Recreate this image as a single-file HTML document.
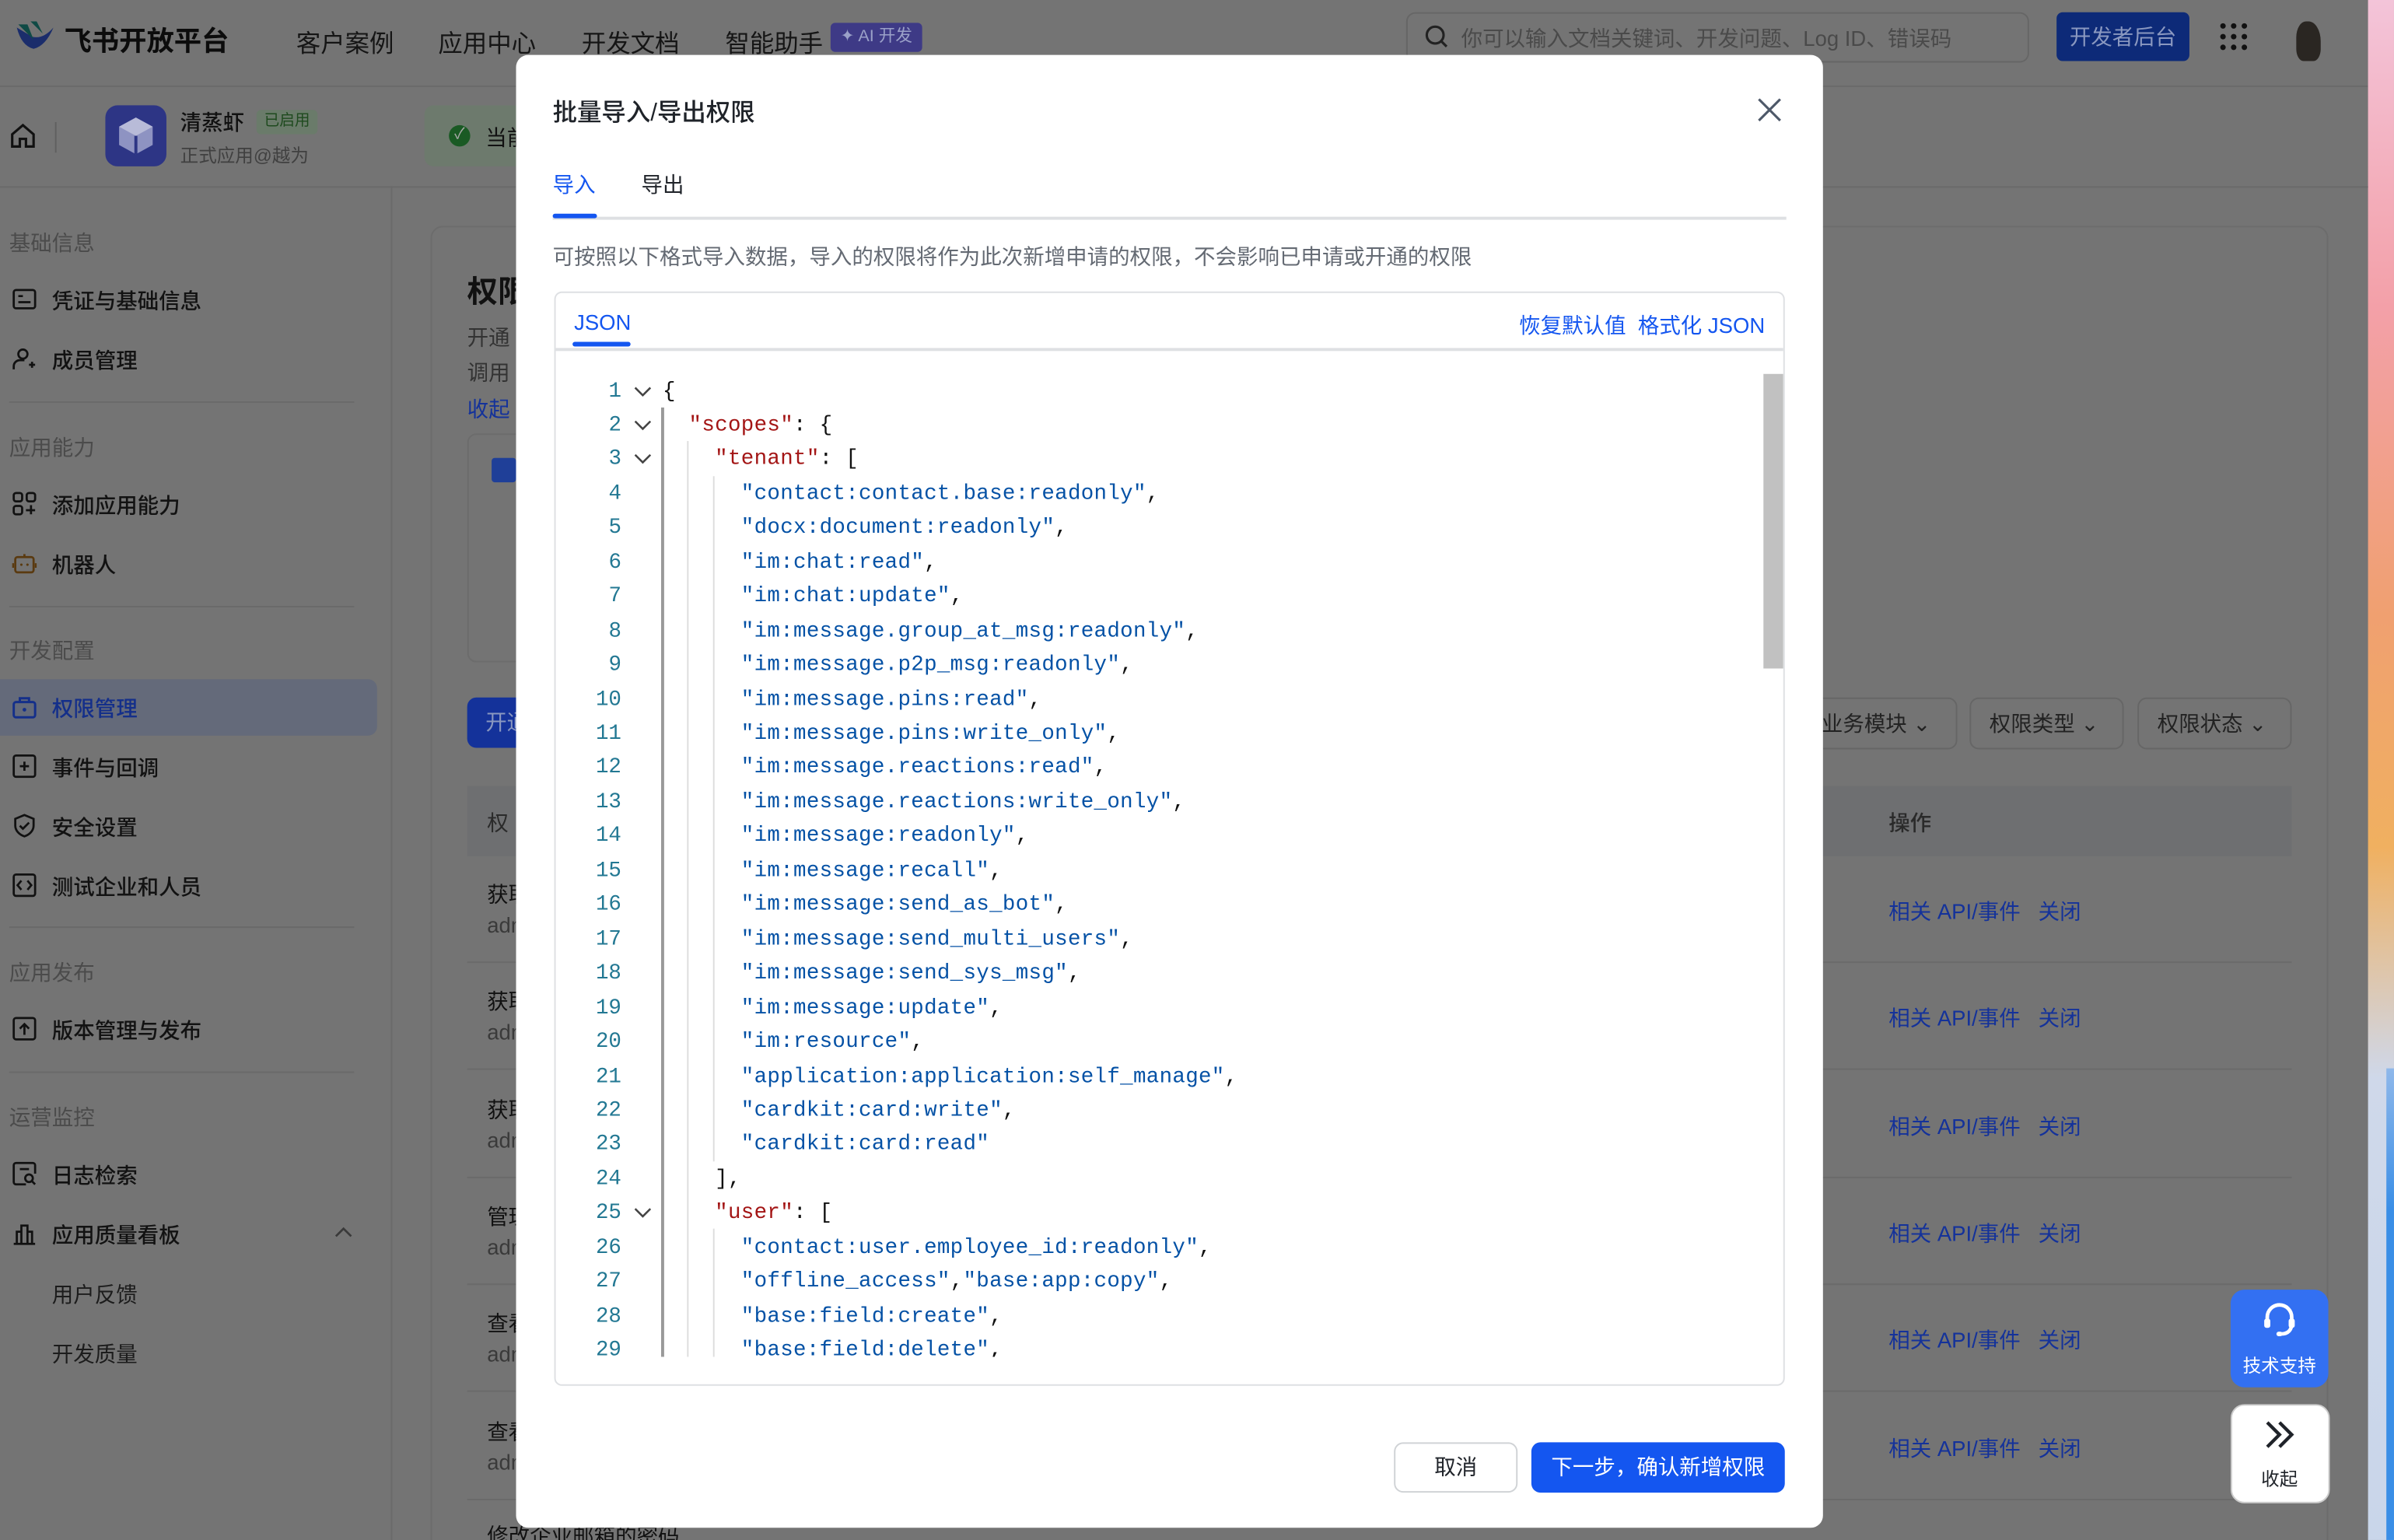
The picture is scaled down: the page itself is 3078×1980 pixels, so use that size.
<!DOCTYPE html>
<html><head><meta charset="utf-8">
<style>
html,body{margin:0;padding:0;width:3078px;height:1980px;overflow:hidden;background:#747474}
#w{position:absolute;left:0;top:0;width:1568px;height:1009px;transform:scale(1.963,1.9623);transform-origin:0 0;font-family:"Liberation Sans","Noto Sans CJK SC",sans-serif;color:#111;background:#747474;overflow:hidden}
.a{position:absolute;white-space:nowrap}
.sec{color:#4b4b4b;font-size:14px}
.it{font-size:14px;color:#121212;font-weight:500}
.ic{position:absolute;width:16px;height:16px}
.hr{position:absolute;height:1px;background:#6a6a6a}
.lk{color:#14329a;font-size:14px}
#modal{position:absolute;left:338px;top:36px;width:856px;height:965px;background:#fff;border-radius:8px}
.code{position:absolute;font-family:"Liberation Mono","DejaVu Sans Mono",monospace;font-size:14px;letter-spacing:0.16px;line-height:22.45px;white-space:pre}
.k{color:#a31515}.s{color:#0451a5}
.ln{position:absolute;left:0;width:68px;text-align:right;font-family:"Liberation Mono",monospace;font-size:14px;line-height:22.45px;color:#237893}
</style></head><body><div id="w">
<!-- header -->
<div class="a" style="left:0;top:56px;width:1551px;height:1px;background:#6a6a6a"></div>
<svg class="a" style="left:8px;top:12px" width="28" height="24" viewBox="0 0 28 24"><path d="M3 6 Q6 18 14 20 Q22 18 27 6 Q20 14 13 12 Z" fill="#1b2d6b"/><path d="M4 4 L10 4 L14 14 Z" fill="#0f4a45"/><path d="M12 2 L16 2 L20 10 Z" fill="#0f4a45"/></svg>
<div class="a" style="left:42px;top:13px;font-size:18px;font-weight:700;color:#0c0c0c">飞书开放平台</div>
<div class="a" style="left:194px;top:15px;font-size:16px;color:#151515">客户案例</div>
<div class="a" style="left:287px;top:15px;font-size:16px;color:#151515">应用中心</div>
<div class="a" style="left:381px;top:15px;font-size:16px;color:#151515">开发文档</div>
<div class="a" style="left:475px;top:15px;font-size:16px;color:#151515">智能助手</div>
<div class="a" style="left:544px;top:15px;width:60px;height:19px;border-radius:3px;background:#3e3a86;color:#9aa0c8;font-size:11px;line-height:19px;text-align:center">✦ AI 开发</div>
<div class="a" style="left:921px;top:8px;width:406px;height:31px;border:1px solid #666;border-radius:6px"></div>
<svg class="a" style="left:933px;top:16px" width="16" height="16" viewBox="0 0 16 16"><circle cx="7" cy="7" r="5.5" fill="none" stroke="#222" stroke-width="1.6"/><path d="M11 11l3.5 3.5" stroke="#222" stroke-width="1.6"/></svg>
<div class="a" style="left:957px;top:15px;font-size:14px;color:#4a4a4a">你可以输入文档关键词、开发问题、Log ID、错误码</div>
<div class="a" style="left:1347px;top:8px;width:87px;height:32px;border-radius:4px;background:#0d2a78;color:#8a98c0;font-size:14px;line-height:32px;text-align:center">开发者后台</div>
<svg class="a" style="left:1454px;top:15px" width="18" height="18"><g fill="#111"><circle cx="2" cy="2" r="1.8"/><circle cx="9" cy="2" r="1.8"/><circle cx="16" cy="2" r="1.8"/><circle cx="2" cy="9" r="1.8"/><circle cx="9" cy="9" r="1.8"/><circle cx="16" cy="9" r="1.8"/><circle cx="2" cy="16" r="1.8"/><circle cx="9" cy="16" r="1.8"/><circle cx="16" cy="16" r="1.8"/></g></svg>
<div class="a" style="left:1504px;top:14px;width:16px;height:26px;border-radius:40% 50% 30% 30%;background:#2a2622"></div>
<!-- right strip -->
<div class="a" style="left:1551px;top:0;width:17px;height:1009px;background:linear-gradient(#f3c4d9,#f3a0a8 20%,#f0a070 40%,#f0b060 55%,#cfd8ea 70%,#c9d6ea 100%)"></div>
<div class="a" style="left:1563px;top:700px;width:5px;height:309px;background:linear-gradient(#8fb8ea,#3a8ee6 30%)"></div>
<!-- app bar -->
<svg class="a" style="left:6px;top:80px" width="18" height="18" viewBox="0 0 18 18"><path d="M2 8 L9 2 L16 8 V16 H11 V11 H7 V16 H2 Z" fill="none" stroke="#111" stroke-width="1.6"/></svg>
<div class="a" style="left:36px;top:80px;width:1px;height:20px;background:#606060"></div>
<div class="a" style="left:69px;top:69px;width:40px;height:40px;border-radius:8px;background:#2d3585"></div>
<svg class="a" style="left:76px;top:75px" width="26" height="28" viewBox="0 0 26 28"><path d="M13 2 L24 8 V20 L13 26 L2 20 V8 Z" fill="#8e93c2"/><path d="M13 2 L24 8 L13 14 L2 8 Z" fill="#b8bbd8"/><path d="M13 14 V26" stroke="#2d3585" stroke-width="2"/></svg>
<div class="a" style="left:118px;top:70px;font-size:14px;color:#111;font-weight:500">清蒸虾</div>
<div class="a" style="left:168px;top:72px;width:40px;height:16px;background:#6a7b6a;border-radius:3px;color:#1e4a1e;font-size:10px;line-height:16px;text-align:center">已启用</div>
<div class="a" style="left:118px;top:93px;font-size:12px;color:#404040">正式应用@越为</div>
<div class="a" style="left:278px;top:69px;width:70px;height:40px;background:#6d7a6d;border-radius:6px"></div>
<div class="a" style="left:294px;top:82px;width:14px;height:14px;border-radius:50%;background:#1a5a24;color:#aaa;font-size:10px;line-height:14px;text-align:center">✓</div>
<div class="a" style="left:318px;top:80px;font-size:14px;color:#111">当前</div>
<div class="a" style="left:0;top:122px;width:1551px;height:1px;background:#6a6a6a"></div>
<!-- sidebar -->
<div class="a" style="left:256px;top:122px;width:1px;height:887px;background:#6a6a6a"></div>
<div class="a sec" style="left:6px;top:149px">基础信息</div>
<svg class="ic" style="left:8px;top:188px" viewBox="0 0 16 16"><rect x="1" y="2" width="14" height="12" rx="1.5" fill="none" stroke="#111" stroke-width="1.4"/><path d="M4 6h3M4 10h8" stroke="#111" stroke-width="1.4"/></svg>
<div class="a it" style="left:34px;top:187px">凭证与基础信息</div>
<svg class="ic" style="left:8px;top:227px" viewBox="0 0 16 16"><circle cx="7" cy="5" r="3" fill="none" stroke="#111" stroke-width="1.4"/><path d="M1 15v-2a4 4 0 0 1 4-4h3M11 12h4M13 10v4" fill="none" stroke="#111" stroke-width="1.4"/></svg>
<div class="a it" style="left:34px;top:226px">成员管理</div>
<div class="hr" style="left:6px;top:263px;width:226px"></div>
<div class="a sec" style="left:6px;top:283px">应用能力</div>
<svg class="ic" style="left:8px;top:322px" viewBox="0 0 16 16"><g fill="none" stroke="#111" stroke-width="1.4"><rect x="1" y="1" width="5.5" height="5.5" rx="1.5"/><rect x="9.5" y="1" width="5.5" height="5.5" rx="1.5"/><rect x="1" y="9.5" width="5.5" height="5.5" rx="1.5"/><path d="M9 12.3h6M12.3 9v6"/></g></svg>
<div class="a it" style="left:34px;top:321px">添加应用能力</div>
<svg class="ic" style="left:8px;top:361px" viewBox="0 0 16 16"><rect x="2" y="4" width="12" height="10" rx="1.5" fill="none" stroke="#5a3a10" stroke-width="1.4"/><path d="M8 2v2M0.5 8v3M15.5 8v3" stroke="#5a3a10" stroke-width="1.4"/><circle cx="6" cy="9" r=".8" fill="#5a3a10"/><circle cx="10" cy="9" r=".8" fill="#5a3a10"/></svg>
<div class="a it" style="left:34px;top:360px">机器人</div>
<div class="hr" style="left:6px;top:397px;width:226px"></div>
<div class="a sec" style="left:6px;top:416px">开发配置</div>
<div class="a" style="left:0;top:445px;width:247px;height:37px;background:#646a7a;border-radius:0 6px 6px 0"></div>
<svg class="ic" style="left:8px;top:455px" viewBox="0 0 16 16"><rect x="1" y="5" width="14" height="10" rx="1.5" fill="none" stroke="#142f8a" stroke-width="1.5"/><path d="M5 5V2.5h6V5" fill="none" stroke="#142f8a" stroke-width="1.5"/><circle cx="8" cy="10" r="1.2" fill="#142f8a"/></svg>
<div class="a it" style="left:34px;top:454px;color:#142f8a">权限管理</div>
<svg class="ic" style="left:8px;top:494px" viewBox="0 0 16 16"><rect x="1" y="1" width="14" height="14" rx="1.5" fill="none" stroke="#111" stroke-width="1.4"/><path d="M5 8h6M8 5v6" stroke="#111" stroke-width="1.4"/></svg>
<div class="a it" style="left:34px;top:493px">事件与回调</div>
<svg class="ic" style="left:8px;top:533px" viewBox="0 0 16 16"><path d="M8 1l6 2.5v4.5c0 3.5-3 6-6 7-3-1-6-3.5-6-7V3.5z" fill="none" stroke="#111" stroke-width="1.4"/><path d="M5 8l2 2 4-4" fill="none" stroke="#111" stroke-width="1.4"/></svg>
<div class="a it" style="left:34px;top:532px">安全设置</div>
<svg class="ic" style="left:8px;top:572px" viewBox="0 0 16 16"><rect x="1" y="1" width="14" height="14" rx="1.5" fill="none" stroke="#111" stroke-width="1.4"/><path d="M6 5L3.5 8 6 11M10 5l2.5 3L10 11" fill="none" stroke="#111" stroke-width="1.4"/></svg>
<div class="a it" style="left:34px;top:571px">测试企业和人员</div>
<div class="hr" style="left:6px;top:607px;width:226px"></div>
<div class="a sec" style="left:6px;top:627px">应用发布</div>
<svg class="ic" style="left:8px;top:666px" viewBox="0 0 16 16"><rect x="1" y="1" width="14" height="14" rx="1.5" fill="none" stroke="#111" stroke-width="1.4"/><path d="M8 12V5M5 8l3-3 3 3" fill="none" stroke="#111" stroke-width="1.4"/></svg>
<div class="a it" style="left:34px;top:665px">版本管理与发布</div>
<div class="hr" style="left:6px;top:702px;width:226px"></div>
<div class="a sec" style="left:6px;top:722px">运营监控</div>
<svg class="ic" style="left:8px;top:761px" viewBox="0 0 16 16"><path d="M9 15H2.5A1.5 1.5 0 0 1 1 13.5v-11A1.5 1.5 0 0 1 2.5 1h11A1.5 1.5 0 0 1 15 2.5V8M5 5h6" fill="none" stroke="#111" stroke-width="1.4"/><circle cx="11" cy="11" r="2.5" fill="none" stroke="#111" stroke-width="1.4"/><path d="M13 13l2 2" stroke="#111" stroke-width="1.4"/></svg>
<div class="a it" style="left:34px;top:760px">日志检索</div>
<svg class="ic" style="left:8px;top:800px" viewBox="0 0 16 16"><path d="M1 15h14M3 15V7h3v8M6 15V3h4v12M10 15V7h3v8" fill="none" stroke="#111" stroke-width="1.4"/></svg>
<div class="a it" style="left:34px;top:799px">应用质量看板</div>
<svg class="a" style="left:219px;top:803px" width="12" height="8"><path d="M1 7l5-5 5 5" fill="none" stroke="#3a3a3a" stroke-width="1.4"/></svg>
<div class="a" style="left:34px;top:838px;font-size:14px;color:#1c1c1c">用户反馈</div>
<div class="a" style="left:34px;top:877px;font-size:14px;color:#1c1c1c">开发质量</div>
<!-- main card -->
<div class="a" style="left:282px;top:148px;width:1241px;height:880px;border:1px solid #6c6c6c;border-radius:8px"></div>
<div class="a" style="left:306px;top:175px;font-size:20px;font-weight:700">权限</div>
<div class="a" style="left:306px;top:211px;font-size:14px;color:#333">开通</div>
<div class="a" style="left:306px;top:234px;font-size:14px;color:#333">调用</div>
<div class="a lk" style="left:306px;top:258px">收起</div>
<div class="a" style="left:306px;top:284px;width:40px;height:148px;border:1px solid #6c6c6c;border-radius:6px"></div>
<div class="a" style="left:322px;top:300px;width:16px;height:16px;background:#1f3f98;border-radius:2px"></div>
<div class="a" style="left:306px;top:457px;width:40px;height:33px;background:#14329a;border-radius:6px;color:#8a98c0;font-size:14px;line-height:33px;text-indent:12px">开通</div>
<div class="a" style="left:1178px;top:457px;width:102px;height:32px;border:1px solid #666;border-radius:6px;font-size:14px;color:#222;line-height:32px;text-indent:14px">业务模块 ⌄</div>
<div class="a" style="left:1290px;top:457px;width:99px;height:32px;border:1px solid #666;border-radius:6px;font-size:14px;color:#222;line-height:32px;text-indent:12px">权限类型 ⌄</div>
<div class="a" style="left:1400px;top:457px;width:99px;height:32px;border:1px solid #666;border-radius:6px;font-size:14px;color:#222;line-height:32px;text-indent:12px">权限状态 ⌄</div>
<div class="a" style="left:306px;top:515px;width:1195px;height:46px;background:#6e6f71"></div>
<div class="a" style="left:319px;top:529px;font-size:14px;color:#2a2a2a">权</div>
<div class="a" style="left:1237px;top:529px;font-size:14px;color:#2a2a2a;font-weight:500">操作</div>
<div id="rows"></div>
<!-- float buttons -->
<div class="a" style="left:1461px;top:845px;width:64px;height:64px;background:#3370f2;border-radius:9px"></div>
<svg class="a" style="left:1481px;top:853px" width="24" height="26" viewBox="0 0 24 26"><path d="M4 13V10a8 8 0 0 1 16 0v4c0 4-2 7-7 7" fill="none" stroke="#fff" stroke-width="2.4"/><rect x="2" y="11" width="4" height="6" rx="1.5" fill="#fff"/><rect x="18" y="11" width="4" height="6" rx="1.5" fill="#fff"/><rect x="10" y="19.5" width="4" height="3" rx="1.5" fill="#fff"/></svg>
<div class="a" style="left:1461px;top:886px;width:64px;text-align:center;color:#fff;font-size:12px">技术支持</div>
<div class="a" style="left:1461px;top:920px;width:63px;height:63px;background:#fff;border:1px solid #ccc;border-radius:9px"></div>
<svg class="a" style="left:1482px;top:930px" width="22" height="20"><path d="M3 2l8 8-8 8M11 2l8 8-8 8" fill="none" stroke="#1f2329" stroke-width="2.2"/></svg>
<div class="a" style="left:1461px;top:960px;width:64px;text-align:center;color:#1f2329;font-size:12px">收起</div>

<!-- modal -->
<div id="modal">
<div class="a" style="left:24px;top:24px;font-size:16px;font-weight:500;color:#1f2329">批量导入/导出权限</div>
<svg class="a" style="left:812px;top:27px" width="18" height="18"><path d="M2 2l14 14M16 2L2 16" stroke="#4e5969" stroke-width="1.6"/></svg>
<div class="a" style="left:24px;top:75px;font-size:14px;color:#1456f0">导入</div>
<div class="a" style="left:82px;top:75px;font-size:14px;color:#1f2329">导出</div>
<div class="a" style="left:24px;top:106px;width:808px;height:1.5px;background:#dee0e3"></div>
<div class="a" style="left:24px;top:104px;width:29px;height:3px;background:#1456f0;border-radius:2px"></div>
<div class="a" style="left:24px;top:122px;font-size:14px;color:#646a73">可按照以下格式导入数据，导入的权限将作为此次新增申请的权限，不会影响已申请或开通的权限</div>
<div class="a" style="left:25px;top:155px;width:804px;height:715px;border:1px solid #dee0e3;border-radius:5px;overflow:hidden">
 <div class="a" style="left:12px;top:11px;font-size:14px;color:#1456f0">JSON</div>
 <div class="a" style="left:11px;top:32px;width:38px;height:3px;background:#1456f0;border-radius:2px"></div>
 <div class="a" style="right:12px;top:11px;font-size:14px;color:#1456f0">恢复默认值&nbsp;&nbsp;格式化 JSON</div>
 <div class="a" style="left:0;top:36px;width:804px;height:1.5px;background:#dee0e3"></div>
 <div class="a" style="left:791px;top:53px;width:13px;height:193px;background:#c1c1c1"></div>
 <div class="a" style="left:0;top:0;width:790px;height:697px;overflow:hidden">
 <div class="a" style="left:69px;top:75px;width:1.5px;height:640px;background:#999"></div>
 <div class="a" style="left:86px;top:97px;width:1px;height:618px;background:#ddd"></div>
 <div class="a" style="left:103px;top:120px;width:1px;height:449px;background:#ddd"></div>
 <div class="a" style="left:103px;top:613px;width:1px;height:102px;background:#ddd"></div>
 <div id="lns" class="ln" style="top:53.5px;left:-25px"></div>
 <div class="a" style="left:51px;top:53.5px">
  <svg width="12" height="22.45" style="display:block"><path d="M1 8l5 5 5-5" fill="none" stroke="#444" stroke-width="1.3"/></svg>
  <svg width="12" height="22.45" style="display:block"><path d="M1 8l5 5 5-5" fill="none" stroke="#444" stroke-width="1.3"/></svg>
  <svg width="12" height="22.45" style="display:block"><path d="M1 8l5 5 5-5" fill="none" stroke="#444" stroke-width="1.3"/></svg>
 </div>
 <svg class="a" style="left:51px;top:592.3px" width="12" height="22"><path d="M1 8l5 5 5-5" fill="none" stroke="#444" stroke-width="1.3"/></svg>
<div class="code" style="left:70px;top:53.5px">{
  <span class="k">"scopes"</span>: {
    <span class="k">"tenant"</span>: [
      <span class="s">"contact:contact.base:readonly"</span>,
      <span class="s">"docx:document:readonly"</span>,
      <span class="s">"im:chat:read"</span>,
      <span class="s">"im:chat:update"</span>,
      <span class="s">"im:message.group_at_msg:readonly"</span>,
      <span class="s">"im:message.p2p_msg:readonly"</span>,
      <span class="s">"im:message.pins:read"</span>,
      <span class="s">"im:message.pins:write_only"</span>,
      <span class="s">"im:message.reactions:read"</span>,
      <span class="s">"im:message.reactions:write_only"</span>,
      <span class="s">"im:message:readonly"</span>,
      <span class="s">"im:message:recall"</span>,
      <span class="s">"im:message:send_as_bot"</span>,
      <span class="s">"im:message:send_multi_users"</span>,
      <span class="s">"im:message:send_sys_msg"</span>,
      <span class="s">"im:message:update"</span>,
      <span class="s">"im:resource"</span>,
      <span class="s">"application:application:self_manage"</span>,
      <span class="s">"cardkit:card:write"</span>,
      <span class="s">"cardkit:card:read"</span>
    ],
    <span class="k">"user"</span>: [
      <span class="s">"contact:user.employee_id:readonly"</span>,
      <span class="s">"offline_access"</span>,<span class="s">"base:app:copy"</span>,
      <span class="s">"base:field:create"</span>,
      <span class="s">"base:field:delete"</span>,</div>
 </div>
</div>
<div class="a" style="left:575px;top:909px;width:79px;height:31px;border:1px solid #d0d3d6;border-radius:6px;font-size:14px;color:#1f2329;text-align:center;line-height:31px">取消</div>
<div class="a" style="left:665px;top:909px;width:166px;height:33px;background:#1456f0;border-radius:6px;font-size:14px;color:#fff;text-align:center;line-height:33px">下一步，确认新增权限</div>
</div>
</div>
<script>
var s='';for(var i=1;i<=29;i++)s+=i+'<br>';document.getElementById('lns').innerHTML=s;
var r='',ys=[585,655,726,796,866,937];var t=['获取','获取','获取','管理','查看','查看'];
for(var j=0;j<6;j++){var y=ys[j];
r+='<div class="a" style="left:319px;top:'+(y-9)+'px;font-size:14px;color:#111">'+t[j]+'</div>';
r+='<div class="a" style="left:319px;top:'+(y+13)+'px;font-size:14px;color:#3a3a3a">adm</div>';
r+='<div class="a lk" style="left:1237px;top:'+(y+2)+'px">相关 API/事件&nbsp;&nbsp;&nbsp;关闭</div>';
r+='<div class="hr" style="left:306px;top:'+(y+45)+'px;width:1195px"></div>';}
r+='<div class="a" style="left:319px;top:996px;font-size:14px;color:#111">修改企业邮箱的密码</div>';
document.getElementById('rows').outerHTML=r;
</script>
</body></html>
